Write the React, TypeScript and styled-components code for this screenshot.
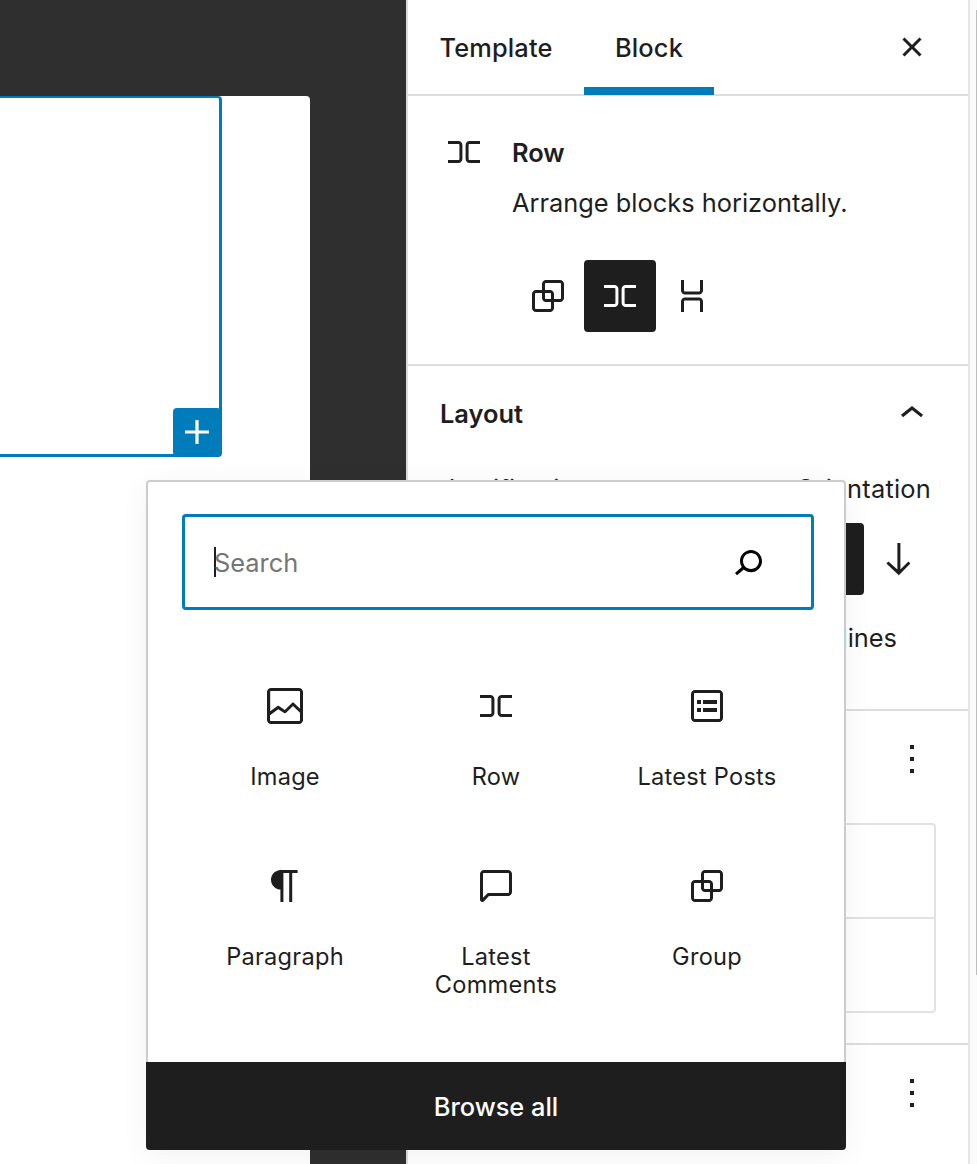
import React from "react";
import styled, { createGlobalStyle, css } from "styled-components";

const ink = "#1e1e1e";
const blue = "#007cba";
const line = "#dddddd";

const GlobalStyle = createGlobalStyle`
  *, *::before, *::after { box-sizing: border-box; }
  html, body { margin: 0; height: 100%; background: #fff; overflow: hidden; }
  body {
    font-family: Inter, "Liberation Sans", sans-serif;
    font-size: 25.4px;
    line-height: 36px;
    color: ${ink};
  }
  button { font: inherit; color: inherit; border: 0; background: none; padding: 0; }
`;

/* ---------- icons, on a 24-unit grid ---------- */

const paths = {
  row: "M9.2 6.5H4V8h5.2c.3 0 .5.2.5.5v7c0 .3-.2.5-.5.5H4v1.5h5.2c1.1 0 2-.9 2-2v-7c0-1.1-.9-2-2-2zM14.8 8H20V6.5h-5.2c-1.1 0-2 .9-2 2v7c0 1.1.9 2 2 2H20V16h-5.2c-.3 0-.5-.2-.5-.5v-7c0-.3.2-.5.5-.5z",
  stack:
    "M6.5 9.2V4H8v5.2c0 .3.2.5.5.5h7c.3 0 .5-.2.5-.5V4h1.5v5.2c0 1.1-.9 2-2 2h-7c-1.1 0-2-.9-2-2zM8 14.8V20H6.5v-5.2c0-1.1.9-2 2-2h7c1.1 0 2 .9 2 2V20H16v-5.2c0-.3-.2-.5-.5-.5h-7c-.3 0-.5.2-.5.5z",
  group:
    "M18 4h-7c-1.1 0-2 .9-2 2v3H6c-1.1 0-2 .9-2 2v7c0 1.1.9 2 2 2h7c1.1 0 2-.9 2-2v-3h3c1.1 0 2-.9 2-2V6c0-1.1-.9-2-2-2zm-4.5 14c0 .3-.2.5-.5.5H6c-.3 0-.5-.2-.5-.5v-7c0-.3.2-.5.5-.5h3V13c0 1.1.9 2 2 2h2.5v3zm0-4.5H11c-.3 0-.5-.2-.5-.5v-2.5H13c.3 0 .5.2.5.5v2.5zm5-.5c0 .3-.2.5-.5.5h-3V11c0-1.1-.9-2-2-2h-2.5V6c0-.3.2-.5.5-.5h7c.3 0 .5.2.5.5v7z",
  image:
    "M19 3H5c-1.1 0-2 .9-2 2v14c0 1.1.9 2 2 2h14c1.1 0 2-.9 2-2V5c0-1.1-.9-2-2-2zM5 4.5h14c.3 0 .5.2.5.5v8.4l-3-2.9c-.3-.3-.8-.3-1 0L11.9 14 9 12c-.3-.2-.6-.2-.8 0l-3.6 2.6V5c-.1-.3.1-.5.4-.5zm14 15H5c-.3 0-.5-.2-.5-.5v-2.4l4.1-3 3 1.9c.3.2.7.2.9-.1L16 12l3.5 3.4V19c0 .3-.2.5-.5.5z",
  postList:
    "M18 4H6c-1.1 0-2 .9-2 2v12c0 1.1.9 2 2 2h12c1.1 0 2-.9 2-2V6c0-1.1-.9-2-2-2zm.5 14c0 .3-.2.5-.5.5H6c-.3 0-.5-.2-.5-.5V6c0-.3.2-.5.5-.5h12c.3 0 .5.2.5.5v12zM7 11h2V9H7v2zm0 4h2v-2H7v2zm3-4h7V9h-7v2zm0 4h7v-2h-7v2z",
  paragraph:
    "M18.3 4H9.9v-.1l-.9.2c-2.3.4-4 2.4-4 4.8s1.7 4.4 4 4.8l.7.1V20h1.5V5.5h2.9V20h1.5V5.5h2.7V4z",
  comment:
    "M18 4H6c-1.1 0-2 .9-2 2v12.9c0 .6.5 1.1 1.1 1.1.3 0 .5-.1.8-.3L8.5 17H18c1.1 0 2-.9 2-2V6c0-1.1-.9-2-2-2zm.5 11c0 .3-.2.5-.5.5H7.9l-2.4 2.4V6c0-.3.2-.5.5-.5h12c.3 0 .5.2.5.5v9z",
  close:
    "M12 13.06l3.712 3.713 1.061-1.06L13.061 12l3.712-3.712-1.06-1.06L12 10.938 8.288 7.227l-1.061 1.06L10.939 12l-3.712 3.712 1.06 1.061L12 13.061z",
  plus: "M18 11.2h-5.2V6h-1.6v5.2H6v1.6h5.2V18h1.6v-5.2H18z",
  chevronUp: "M6.5 12.4L12 8l5.5 4.4-.9 1.2L12 10l-4.5 3.6-1-1.2z",
  search:
    "M13.5 6C10.5 6 8 8.5 8 11.5c0 1.1.3 2.1.9 3l-3.4 3 1 1.1 3.4-2.9c1 .9 2.2 1.4 3.6 1.4 3 0 5.5-2.5 5.5-5.5C19 8.5 16.5 6 13.5 6zm0 9.5c-2.2 0-4-1.8-4-4s1.8-4 4-4 4 1.8 4 4-1.8 4-4 4z",
  arrowDown: "M16.2 13.2l-4 4V4h-1.5v13.3l-4.5-4.1-1 1.1 6.2 5.8 5.8-5.8-1-1.1z",
  arrowRight: "M14.3 6.7l-1.1 1.1 4 4H4v1.5h13.3l-4.1 4.4 1.1 1.1 5.8-6.3-5.8-5.8z",
  more: "M13 19h-2v-2h2v2zm0-6h-2v-2h2v2zm0-6h-2V5h2v2z",
};

type IconName = keyof typeof paths;

const Glyph = styled.svg`
  display: block;
  flex: none;
  width: 48px;
  height: 48px;
  fill: currentColor;
`;

const Icon = ({ name }: { name: IconName }) => (
  <Glyph viewBox="0 0 24 24" aria-hidden="true">
    <path d={paths[name]} />
  </Glyph>
);

/* ---------- frame ---------- */

const Editor = styled.div`
  position: relative;
  display: flex;
  width: 977px;
  height: 1164px;
  overflow: hidden;
  background: #fff;
`;

const Canvas = styled.main`
  flex: none;
  width: 406px;
  padding: 96px 96px 0 0;
  background: #2f2f2f;
`;

const Sheet = styled.div`
  height: 100%;
  background: #fff;
  border-radius: 0 4px 0 0;
`;

const SelectedBlock = styled.div`
  display: flex;
  align-items: flex-end;
  justify-content: flex-end;
  width: 222px;
  height: 361px;
  border: solid ${blue};
  border-width: 2px 3px 3px 0;
  border-radius: 0 4px 4px 0;
`;

const Appender = styled.button`
  display: grid;
  place-items: center;
  width: 48px;
  height: 48px;
  margin: 0 -2px -2px 0;
  border-radius: 4px;
  background: ${blue};
  color: #fff;
`;

/* ---------- sidebar ---------- */

const Sidebar = styled.aside`
  flex: none;
  width: 564px;
  border-left: 2px solid ${line};
  border-right: 2px solid #e6e6e6;
  background: #fff;
`;

const ScrollTrack = styled.div`
  flex: 1;
  display: flex;
  justify-content: flex-end;
  padding-top: 10px;
  background: #fafafa;
`;

const ScrollThumb = styled.div`
  width: 1px;
  height: 965px;
  background: #bdbdbd;
`;

const TabBar = styled.div`
  display: flex;
  align-items: stretch;
  height: 96px;
  border-bottom: 2px solid ${line};
`;

const Tab = styled.button<{ $width: number; $active?: boolean }>`
  width: ${(p) => p.$width}px;
  height: 95px;
  padding-top: 1px;
  font-weight: 550;
  letter-spacing: 0.15px;
  ${(p) => p.$active && css`box-shadow: inset 0 -8px 0 ${blue};`}
`;

const CloseButton = styled.button`
  margin-left: auto;
  padding-right: 32px;
`;

const Card = styled.section`
  display: flex;
  gap: 24px;
  height: 270px;
  padding: 32px;
  border-bottom: 2px solid ${line};
`;

const CardBody = styled.div`
  padding-top: 7px;
`;

const CardTitle = styled.h2`
  margin: 0;
  font-size: 25.4px;
  line-height: 36px;
  font-weight: 600;
`;

const CardText = styled.p`
  margin: 14px 0 39px;
  white-space: nowrap;
`;

const ButtonRow = styled.div`
  display: flex;
`;

const ToolButton = styled.button<{ $active?: boolean }>`
  display: grid;
  place-items: center;
  width: 72px;
  height: 72px;
  border-radius: 4px;
  background: ${(p) => (p.$active ? ink : "transparent")};
  color: ${(p) => (p.$active ? "#fff" : ink)};
`;

const Panel = styled.section<{ $height: number }>`
  height: ${(p) => p.$height}px;
  padding: 0 32px;
  border-bottom: 2px solid ${line};
`;

const PanelHeader = styled.header`
  display: flex;
  align-items: center;
  height: 96px;
`;

const PanelTitle = styled.h2`
  flex: 1;
  margin: 0;
  font-size: 25.4px;
  font-weight: 600;
`;

const PanelToggle = styled.button`
  padding-bottom: 1px;
`;

const Columns = styled.div`
  display: flex;
  justify-content: space-between;
  padding-top: 9px;
`;

const Setting = styled.div<{ $width: number }>`
  width: ${(p) => p.$width}px;
  white-space: nowrap;
`;

const SettingLabel = styled.div<{ $indent: number }>`
  height: 52px;
  padding-left: ${(p) => p.$indent}px;
  letter-spacing: 0.2px;
`;

const ToggleRow = styled.div`
  display: flex;
  justify-content: flex-end;
  padding: 25px 39px 0 0;
  white-space: nowrap;
`;

const OptionList = styled.div`
  height: 190px;
  margin-top: 16px;
  border: 2px solid #e2e2e2;
  border-radius: 4px;
`;

const Option = styled.div`
  height: 92px;
  & + & { border-top: 2px solid #e2e2e2; }
`;

/* ---------- inserter popover ---------- */

const Popover = styled.div`
  position: absolute;
  left: 146px;
  top: 480px;
  display: flex;
  flex-direction: column;
  width: 700px;
  height: 670px;
  border: 2px solid #ccc;
  border-bottom: 0;
  border-radius: 4px;
  background: #fff;
  box-shadow: 0 6px 30px rgba(0, 0, 0, 0.055);
`;

const SearchField = styled.div`
  display: flex;
  align-items: center;
  height: 96px;
  margin: 32px 30px 0 34px;
  padding: 0 39px 0 29px;
  border: 3px solid ${blue};
  border-radius: 4px;
  color: #757575;
`;

const Caret = styled.span`
  width: 2px;
  height: 30px;
  margin-right: -2px;
  background: ${ink};
`;

const SearchText = styled.span`
  flex: 1;
  padding-top: 2px;
`;

const SearchIcon = styled.span`
  color: #000;
`;

const BlockGrid = styled.div`
  display: grid;
  grid-template-columns: repeat(3, 211px);
  grid-auto-rows: 180px;
  justify-content: center;
  padding: 48px 0 0 0;
  margin-right: 1px;
`;

const BlockItem = styled.button`
  display: flex;
  flex-direction: column;
  align-items: center;
  padding: 24px 40px 0;
  font-size: 23.6px;
  line-height: 28px;
`;

const BlockLabel = styled.span<{ $wrap?: boolean }>`
  padding: 33px 0 0 1px;
  letter-spacing: 0.25px;
  white-space: ${(p) => (p.$wrap ? "normal" : "nowrap")};
`;

const BrowseAll = styled.button`
  height: 88px;
  margin: auto -2px 0;
  padding-top: 2px;
  border-radius: 0 0 4px 4px;
  background: ${ink};
  color: #fff;
  font-weight: 450;
`;

const blocks: { icon: IconName; label: string; wrap?: boolean }[] = [
  { icon: "image", label: "Image" },
  { icon: "row", label: "Row" },
  { icon: "postList", label: "Latest Posts" },
  { icon: "paragraph", label: "Paragraph" },
  { icon: "comment", label: "Latest Comments", wrap: true },
  { icon: "group", label: "Group" },
];

export default function App() {
  return (
    <Editor>
      <GlobalStyle />
      <Canvas>
        <Sheet>
          <SelectedBlock>
            <Appender aria-label="Add block">
              <Icon name="plus" />
            </Appender>
          </SelectedBlock>
        </Sheet>
      </Canvas>

      <Sidebar>
        <TabBar>
          <Tab $width={176}>Template</Tab>
          <Tab $width={130} $active>Block</Tab>
          <CloseButton aria-label="Close settings">
            <Icon name="close" />
          </CloseButton>
        </TabBar>

        <Card>
          <Icon name="row" />
          <CardBody>
            <CardTitle>Row</CardTitle>
            <CardText>Arrange blocks horizontally.</CardText>
            <ButtonRow>
              <ToolButton aria-label="Group"><Icon name="group" /></ToolButton>
              <ToolButton aria-label="Row" $active><Icon name="row" /></ToolButton>
              <ToolButton aria-label="Stack"><Icon name="stack" /></ToolButton>
            </ButtonRow>
          </CardBody>
        </Card>

        <Panel $height={345}>
          <PanelHeader>
            <PanelTitle>Layout</PanelTitle>
            <PanelToggle aria-label="Collapse layout">
              <Icon name="chevronUp" />
            </PanelToggle>
          </PanelHeader>
          <Columns>
            <Setting $width={300}>
              <SettingLabel $indent={1}>Justification</SettingLabel>
            </Setting>
            <Setting $width={144}>
              <SettingLabel $indent={4}>Orientation</SettingLabel>
              <ButtonRow>
                <ToolButton aria-label="Horizontal" $active><Icon name="arrowRight" /></ToolButton>
                <ToolButton aria-label="Vertical"><Icon name="arrowDown" /></ToolButton>
              </ButtonRow>
            </Setting>
          </Columns>
          <ToggleRow>Allow to wrap to multiple lines</ToggleRow>
        </Panel>

        <Panel $height={334}>
          <PanelHeader>
            <PanelTitle />
            <Icon name="more" />
          </PanelHeader>
          <OptionList>
            <Option />
            <Option />
          </OptionList>
        </Panel>

        <Panel $height={200}>
          <PanelHeader>
            <PanelTitle />
            <Icon name="more" />
          </PanelHeader>
        </Panel>
      </Sidebar>

      <ScrollTrack>
        <ScrollThumb />
      </ScrollTrack>

      <Popover>
        <SearchField>
          <Caret />
          <SearchText>Search</SearchText>
          <SearchIcon><Icon name="search" /></SearchIcon>
        </SearchField>
        <BlockGrid>
          {blocks.map((b) => (
            <BlockItem key={b.label}>
              <Icon name={b.icon} />
              <BlockLabel $wrap={b.wrap}>{b.label}</BlockLabel>
            </BlockItem>
          ))}
        </BlockGrid>
        <BrowseAll>Browse all</BrowseAll>
      </Popover>
    </Editor>
  );
}
